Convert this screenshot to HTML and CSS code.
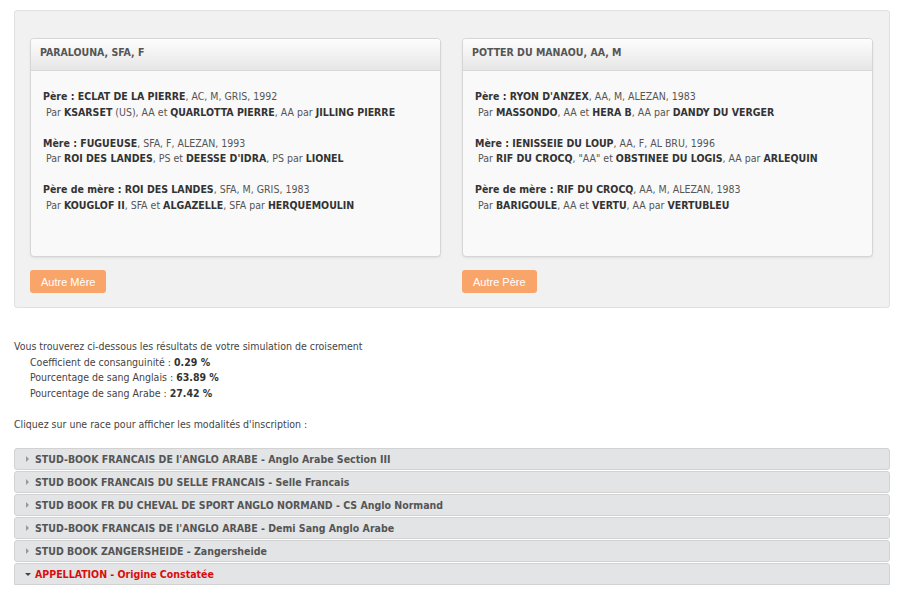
FILE: index.html
```html
<!DOCTYPE html>
<html lang="fr">
<head>
<meta charset="utf-8">
<title>Simulation de croisement</title>
<link rel="stylesheet" href="styles.css">
</head>
<body>
<div class="page">
  <div class="panel">
    <div class="cols">
      <div class="col">
        <div class="card">
          <div class="card-head">PARALOUNA, SFA, F</div>
          <div class="card-body">
            <p class="entry"><b>Père : ECLAT DE LA PIERRE</b>, AC, M, GRIS, 1992<br>&nbsp;Par <b>KSARSET</b> (US), AA et <b>QUARLOTTA PIERRE</b>, AA par <b>JILLING PIERRE</b></p>
            <p class="entry"><b>Mère : FUGUEUSE</b>, SFA, F, ALEZAN, 1993<br>&nbsp;Par <b>ROI DES LANDES</b>, PS et <b>DEESSE D'IDRA</b>, PS par <b>LIONEL</b></p>
            <p class="entry"><b>Père de mère : ROI DES LANDES</b>, SFA, M, GRIS, 1983<br>&nbsp;Par <b>KOUGLOF II</b>, SFA et <b>ALGAZELLE</b>, SFA par <b>HERQUEMOULIN</b></p>
          </div>
        </div>
        <button class="btn">Autre Mère</button>
      </div>
      <div class="col">
        <div class="card">
          <div class="card-head">POTTER DU MANAOU, AA, M</div>
          <div class="card-body">
            <p class="entry"><b>Père : RYON D'ANZEX</b>, AA, M, ALEZAN, 1983<br>&nbsp;Par <b>MASSONDO</b>, AA et <b>HERA B</b>, AA par <b>DANDY DU VERGER</b></p>
            <p class="entry"><b>Mère : IENISSEIE DU LOUP</b>, AA, F, AL BRU, 1996<br>&nbsp;Par <b>RIF DU CROCQ</b>, "AA" et <b>OBSTINEE DU LOGIS</b>, AA par <b>ARLEQUIN</b></p>
            <p class="entry"><b>Père de mère : RIF DU CROCQ</b>, AA, M, ALEZAN, 1983<br>&nbsp;Par <b>BARIGOULE</b>, AA et <b>VERTU</b>, AA par <b>VERTUBLEU</b></p>
          </div>
        </div>
        <button class="btn">Autre Père</button>
      </div>
    </div>
  </div>

  <div class="results">
    <p>Vous trouverez ci-dessous les résultats de votre simulation de croisement</p>
    <p class="ind">Coefficient de consanguinité : <b>0.29 %</b></p>
    <p class="ind">Pourcentage de sang Anglais : <b>63.89 %</b></p>
    <p class="ind">Pourcentage de sang Arabe : <b>27.42 %</b></p>
  </div>

  <p class="hint">Cliquez sur une race pour afficher les modalités d'inscription :</p>

  <div class="accordion">
    <div class="acc-item"><span class="arrow right"></span>STUD-BOOK FRANCAIS DE l'ANGLO ARABE - Anglo Arabe Section III</div>
    <div class="acc-item"><span class="arrow right"></span>STUD BOOK FRANCAIS DU SELLE FRANCAIS - Selle Francais</div>
    <div class="acc-item"><span class="arrow right"></span>STUD BOOK FR DU CHEVAL DE SPORT ANGLO NORMAND - CS Anglo Normand</div>
    <div class="acc-item"><span class="arrow right"></span>STUD-BOOK FRANCAIS DE l'ANGLO ARABE - Demi Sang Anglo Arabe</div>
    <div class="acc-item"><span class="arrow right"></span>STUD BOOK ZANGERSHEIDE - Zangersheide</div>
    <div class="acc-item active"><span class="arrow down"></span>APPELLATION - Origine Constatée</div>
  </div>
</div>
</body>
</html>
```

FILE: styles.css
```css
* { box-sizing: border-box; }
html, body { margin: 0; padding: 0; background: #fff; }
body {
  font-family: "DejaVu Sans Condensed", "DejaVu Sans", Verdana, sans-serif;
  font-stretch: condensed;
  font-size: 10.5px;
  color: #444;
}
.page { padding: 10px 10px 0 14px; }
p { margin: 0; }

.panel {
  width: 876px;
  background: #f1f1f1;
  border: 1px solid #e0e0e0;
  border-radius: 3px;
  padding: 27px 15px 14px 15px;
}
.cols { display: flex; gap: 21px; }
.col { width: 411px; }
.card {
  background: #f9f9f9;
  border: 1px solid #d6d6d6;
  border-radius: 4px;
  box-shadow: 0 1px 2px rgba(0,0,0,0.08);
  height: 219px;
  overflow: hidden;
}
.card-head {
  height: 32px;
  padding: 7px 9px 0;
  font-weight: bold;
  color: #555;
  background: linear-gradient(#fdfdfd, #e6e6e6);
  border-bottom: 1px solid #d9d9d9;
  line-height: 12px;
}
.card-body { padding: 18px 12px 0; }
.entry { line-height: 15.5px; margin-bottom: 15.5px; color: #555; }
.entry b { color: #333; }
.btn {
  margin-top: 13px;
  height: 23px;
  padding: 0 11px;
  border: none;
  border-radius: 3px;
  background: #f9a56a;
  color: #fff;
  font-family: "Liberation Sans", Arial, sans-serif;
  font-stretch: normal;
  font-size: 11px;
}

.results { margin-top: 31px; line-height: 15.5px; color: #444; }
.results .ind { padding-left: 16px; }
.results b { color: #333; }
.hint { margin-top: 16px; line-height: 15.5px; }

.accordion { margin-top: 15px; width: 876px; }
.acc-item {
  height: 22px;
  margin-bottom: 1px;
  background: #e2e4e5;
  border: 1px solid #d2d2d2;
  border-radius: 3px;
  padding-left: 20px;
  line-height: 20px;
  font-weight: bold;
  color: #555;
  position: relative;
}
.acc-item.active { color: #d90d0d; border-bottom-left-radius: 0; border-bottom-right-radius: 0; }
.arrow { position: absolute; left: 11px; top: 8px; width: 0; height: 0; }
.arrow.right { border-left: 3px solid #999; border-top: 3px solid transparent; border-bottom: 3px solid transparent; top: 7px; }
.arrow.down { border-top: 3px solid #444; border-left: 3px solid transparent; border-right: 3px solid transparent; left: 10px; top: 9px; }
```
